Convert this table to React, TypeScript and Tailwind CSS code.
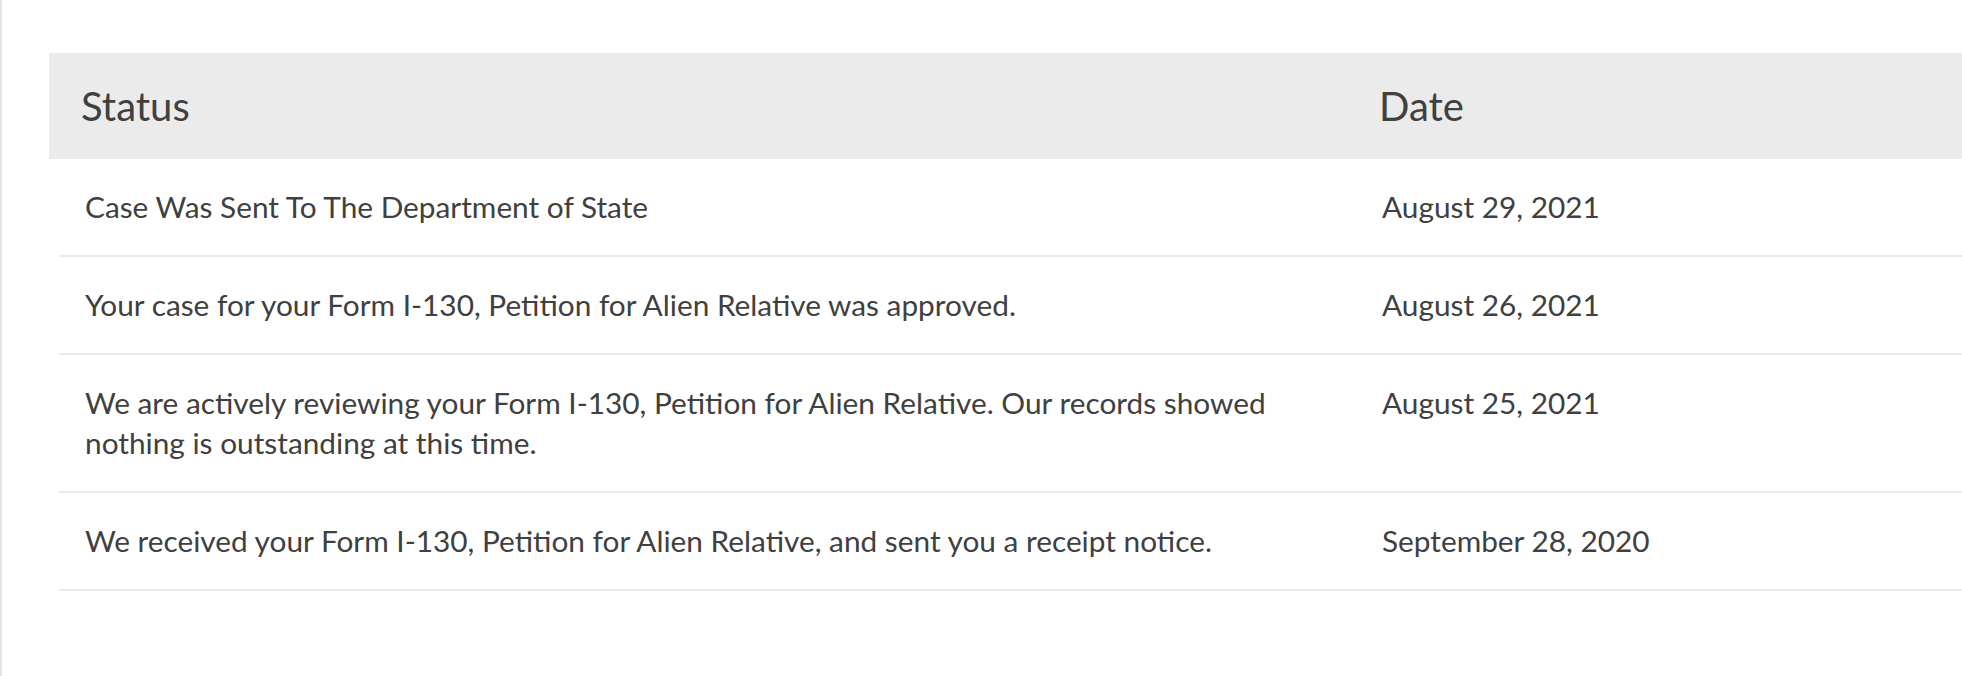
const rows = [
  { status: "Case Was Sent To The Department of State", date: "August 29, 2021" },
  {
    status: "Your case for your Form I-130, Petition for Alien Relative was approved.",
    date: "August 26, 2021",
  },
  {
    status:
      "We are actively reviewing your Form I-130, Petition for Alien Relative. Our records showed nothing is outstanding at this time.",
    date: "August 25, 2021",
  },
  {
    status: "We received your Form I-130, Petition for Alien Relative, and sent you a receipt notice.",
    date: "September 28, 2020",
  },
];

export default function App() {
  return (
    <div
      className="h-[676px] w-[1962px] overflow-hidden bg-white text-[#404040]"
      style={{ fontFamily: "Lato, 'Noto Sans', sans-serif" }}
    >
      <div className="h-full border-l-2 border-[#e4e4e4] pl-[47px] pt-[53px]">
        <div className="w-[2100px]">
          <div className="flex h-[106px] items-center bg-[#ebebeb] text-[40px]">
            <div className="w-[1298px] pl-[32px]">Status</div>
            <div className="pl-[32px]">Date</div>
          </div>
          <div className="ml-[10px]">
            {rows.map((row) => (
              <div
                key={row.date}
                className="flex border-b-2 border-[#ebebeb] py-[28px] text-[29.8px] leading-[40px]"
              >
                <div className="w-[1297px] pl-[26px] pr-[60px]">{row.status}</div>
                <div className="pl-[26px]">{row.date}</div>
              </div>
            ))}
          </div>
        </div>
      </div>
    </div>
  );
}
